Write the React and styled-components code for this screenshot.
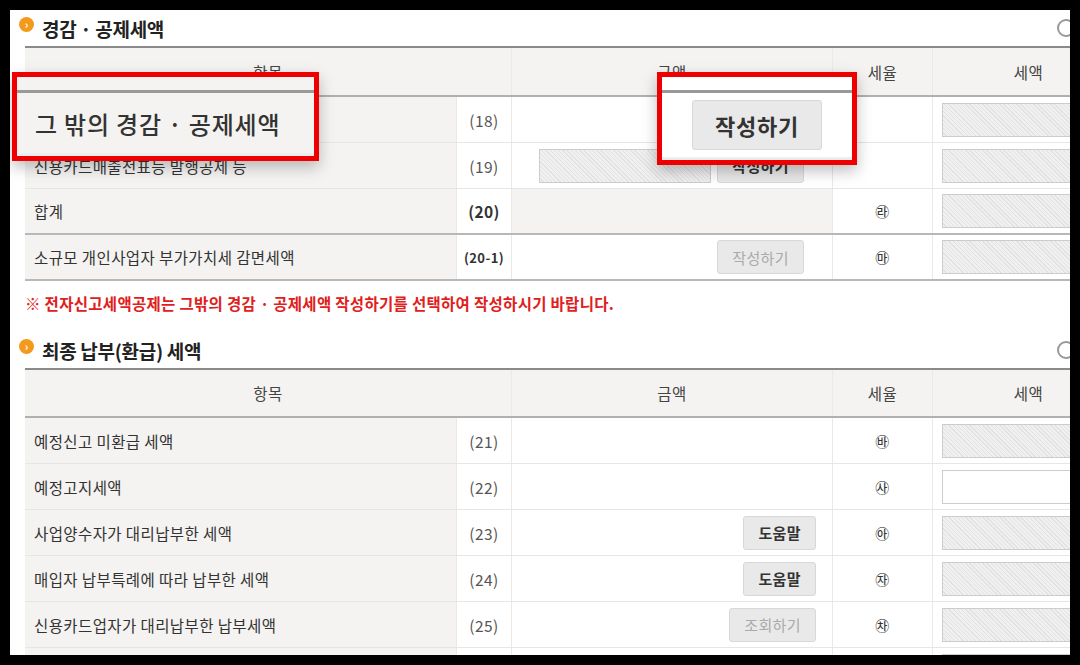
import React from 'react';
import styled, { createGlobalStyle } from 'styled-components';

const Global = createGlobalStyle`
  body { margin: 0; background: #000; font-family: "Noto Sans CJK KR", "Noto Sans", sans-serif; }
`;

const Frame = styled.div`
  width: 1080px; height: 665px; background: #000; padding: 10px 10px 10px 10px;
  box-sizing: border-box; position: relative;
`;
const Page = styled.div`
  background: #fff; width: 1060px; height: 645px; overflow: hidden; padding-left: 15px; box-sizing: border-box;
`;
const Title = styled.h3`
  margin: 0; height: 36px; display: flex; align-items: center; gap: 8px;
  font-size: 19px; font-weight: 700; color: #222; letter-spacing: -0.3px;
  margin-left: -6px; position: relative;
`;
const Bullet = styled.span`
  width: 15px; height: 15px; border-radius: 50%; background: #f39a1d; margin-top: -8px;
  display: flex; align-items: center; justify-content: center; color: #fff; font-size: 11px; font-weight: 700;
`;
const EdgeIcon = styled.span`
  position: absolute; left: 1038px; top: 9px; width: 14px; height: 14px; border: 2px solid #999; border-radius: 50%;
`;
const Table = styled.div`
  width: 1100px; border-top: 2px solid #8a8a8a;
`;
const Row = styled.div`
  display: grid; grid-template-columns: 432px 55px 321px 100px 192px; box-sizing: border-box;
  height: ${p => p.h || 46}px; border-bottom: ${p => p.thick ? '2px solid #b8b8b8' : '1px solid #e8e6e3'};
  font-size: 15.5px; color: #333; letter-spacing: 0.4px; white-space: nowrap;
`;
const Cell = styled.div`
  display: flex; align-items: center; justify-content: ${p => p.align || 'flex-start'};
  background: ${p => p.gray ? '#f4f3f1' : '#fff'}; border-right: 1px solid #ebe9e6;
  padding: 0 ${p => p.pad ?? 9}px; font-weight: ${p => p.bold ? 700 : 400}; gap: 6px;
  box-sizing: border-box; color: ${p => p.muted ? '#555' : '#333'};
`;
const Head = styled(Row)`
  background: #f4f3f1; border-bottom: 2px solid #b0b0b0; color: #444;
`;
const HeadCell = styled.div`
  display: flex; align-items: center; justify-content: center; border-right: 1px solid #ebe9e6;
`;
const Hatch = styled.div`
  width: ${p => p.w || 170}px; height: 34px; box-sizing: border-box; border: 1px solid #ccc; flex-shrink: 0;
  background: ${p => p.plain ? '#fff' : 'repeating-linear-gradient(45deg, #f0f0f0 0 2px, #e2e2e2 2px 3px)'};
`;
const Btn = styled.div`
  padding: 0 ${p => p.big ? 22 : 14}px; display: flex; align-items: center; flex-shrink: 0;
  background: #e9e9e9; border: 1px solid #d8d8d8; border-radius: 3px; box-sizing: border-box; white-space: nowrap;
  color: ${p => p.off ? '#aaa' : '#333'}; font-weight: ${p => p.off ? 400 : 700}; font-size: ${p => p.big ? 22 : 15}px;
  height: ${p => p.big ? 50 : 34}px;
`;
const Note = styled.p`
  margin: 0; height: 44px; display: flex; align-items: center; color: #e0201c; font-size: 15.5px; font-weight: 700;
  letter-spacing: 0.3px;
`;
const Spacer = styled.div` height: ${p => p.h}px; `;
const Callout = styled.div`
  position: absolute; left: ${p => p.x}px; top: ${p => p.y}px; width: ${p => p.w}px; height: ${p => p.h}px;
  border: 5px solid #ee0000; box-sizing: border-box; background: ${p => p.bg};
  box-shadow: 0 6px 14px rgba(0,0,0,0.25); display: flex; flex-direction: column;
`;
const CalloutLine = styled.div` height: 13px; border-bottom: 3px solid #999; background: ${p => p.bg}; `;
const CalloutBody = styled.div`
  flex: 1; display: flex; align-items: center; justify-content: ${p => p.center ? 'center' : 'flex-start'};
  padding-left: ${p => p.center ? 0 : 18}px; font-size: 24px; font-weight: 500; color: #333; letter-spacing: 0.8px;
  border-bottom: 3px solid #eee;
`;

const rate = c => <Cell align="center" pad={0} style={{ fontSize: 14 }}>{c}</Cell>;

export default function App() {
  return (
    <Frame>
      <Global />
      <Page>
        <Title><Bullet>›</Bullet>경감 · 공제세액<EdgeIcon /></Title>
        <Table>
          <Head h={49}><HeadCell style={{ gridColumn: 'span 2' }}>항목</HeadCell><HeadCell>금액</HeadCell><HeadCell>세율</HeadCell><HeadCell>세액</HeadCell></Head>
          <Row>
            <Cell gray>그 밖의 경감 · 공제세액</Cell><Cell align="center" muted>(18)</Cell>
            <Cell align="flex-end" pad={28}><Btn>작성하기</Btn></Cell>{rate('')}<Cell><Hatch /></Cell>
          </Row>
          <Row>
            <Cell gray>신용카드매출전표등 발행공제 등</Cell><Cell align="center" muted>(19)</Cell>
            <Cell align="flex-end" pad={28}><Hatch w={172} /><Btn>작성하기</Btn></Cell>{rate('')}<Cell><Hatch /></Cell>
          </Row>
          <Row thick>
            <Cell gray>합계</Cell><Cell align="center" bold>(20)</Cell><Cell gray />{rate('㉱')}<Cell><Hatch /></Cell>
          </Row>
          <Row thick>
            <Cell gray>소규모 개인사업자 부가가치세 감면세액</Cell><Cell align="center" bold style={{ fontSize: 13 }}>(20-1)</Cell>
            <Cell align="flex-end" pad={28}><Btn off>작성하기</Btn></Cell>{rate('㉲')}<Cell><Hatch /></Cell>
          </Row>
        </Table>
        <Note>※ 전자신고세액공제는 그밖의 경감 · 공제세액 작성하기를 선택하여 작성하시기 바랍니다.</Note>
        <Spacer h={7} />
        <Title><Bullet>›</Bullet>최종 납부(환급) 세액<EdgeIcon /></Title>
        <Table>
          <Head h={48}><HeadCell style={{ gridColumn: 'span 2' }}>항목</HeadCell><HeadCell>금액</HeadCell><HeadCell>세율</HeadCell><HeadCell>세액</HeadCell></Head>
          {[
            ['예정신고 미환급 세액', '(21)', null, '㉳'],
            ['예정고지세액', '(22)', null, '㉴', true],
            ['사업양수자가 대리납부한 세액', '(23)', '도움말', '㉵'],
            ['매입자 납부특례에 따라 납부한 세액', '(24)', '도움말', '㉶'],
            ['신용카드업자가 대리납부한 납부세액', '(25)', '조회하기', '㉷'],
            ['', '', null, ''],
          ].map(([t, n, b, r, plain], i) => (
            <Row key={i}>
              <Cell gray>{t}</Cell><Cell align="center" muted>{n}</Cell>
              <Cell align="flex-end" pad={16}>{b && <Btn off={b === '조회하기'}>{b}</Btn>}</Cell>
              {rate(r)}<Cell><Hatch plain={plain} /></Cell>
            </Row>
          ))}
        </Table>
      </Page>
      <Callout x={12} y={72} w={307} h={89} bg="#f4f3f1">
        <CalloutLine bg="#f4f3f1" /><CalloutBody>그 밖의 경감 · 공제세액</CalloutBody>
      </Callout>
      <Callout x={657} y={72} w={200} h={93} bg="#fff">
        <CalloutLine bg="#fff" /><CalloutBody center><Btn big>작성하기</Btn></CalloutBody>
      </Callout>
    </Frame>
  );
}
